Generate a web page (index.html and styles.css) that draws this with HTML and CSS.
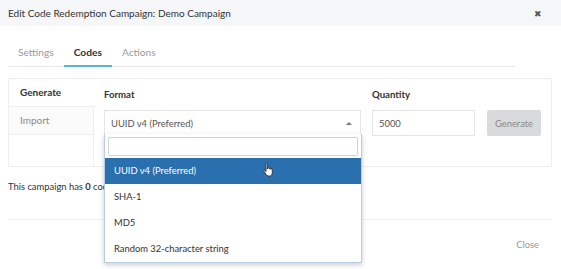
FILE: index.html
```html
<html>
<head>
<meta http-equiv="Content-Type" content="text/html; charset=UTF-8" />
<title>Edit Code Redemption Campaign</title>
<link rel="stylesheet" href="styles.css">
</head>
<body>

<div class="modal">
  <div class="modal-header">
    <span class="title">Edit Code Redemption Campaign: Demo Campaign</span>
    <span class="close-x">&#10006;</span>
  </div>

  <div class="modal-body">
    <ul class="tabs">
      <li><a href="#">Settings</a></li>
      <li class="active"><a href="#">Codes</a></li>
      <li><a href="#">Actions</a></li>
    </ul>

    <div class="panel">
      <ul class="side">
        <li class="active">Generate</li>
        <li>Import</li>
      </ul>
      <div class="form">
        <div class="field">
          <label>Format</label>
          <div class="select">
            <span>UUID v4 (Preferred)</span>
            <span class="caret"></span>
          </div>
        </div>
        <div class="field">
          <label>Quantity</label>
          <input class="qty" type="text" value="5000">
        </div>
        <div class="field">
          <button class="btn" disabled>Generate</button>
        </div>
      </div>
    </div>

    <p class="notice">This campaign has <b>0</b> codes.</p>
  </div>

  <div class="modal-footer">
    <a href="#" class="close-link">Close</a>
  </div>

  <div class="dropdown">
    <div class="search"><input type="text"></div>
    <ul class="options">
      <li class="hl">UUID v4 (Preferred)</li>
      <li>SHA-1</li>
      <li>MD5</li>
      <li>Random 32-character string</li>
    </ul>
  </div>

  <svg class="pointer" width="14" height="16" viewBox="0 0 14 16">
    <path d="M4 1.5c0-.8 1.4-.8 1.4 0V7l.4-.1V5.6c0-.8 1.4-.8 1.4 0v1.3l.3-.1c0-.8 1.4-.8 1.4 0v.6c.2-.7 1.4-.6 1.4.2v3.2c0 1.6-1 3.2-2.8 3.2H6.4c-1 0-1.7-.6-2.2-1.4L2 9.3c-.4-.7.6-1.4 1.2-.8L4 9.5z" fill="#fff" stroke="#222" stroke-width="0.8"/>
  </svg>
</div>

</body>
</html>
```

FILE: styles.css
```css
body {
	margin: 0;
	padding: 0;
	background: #fff;
	font-family: "Lato", "Liberation Sans", sans-serif;
	font-size: 10px;
	color: #333;
}

ul {
	list-style: none;
	margin: 0;
	padding: 0;
}

.modal {
	position: relative;
	width: 561px;
	height: 269px;
	overflow: hidden;
}

.modal-header {
	height: 26px;
	padding: 0 19px 0 8px;
	background: #f5f6f7;
	display: flex;
	align-items: center;
	justify-content: space-between;
}

.title {
	font-size: 10px;
	color: #333;
}

.close-x {
	font-size: 9px;
	color: #555;
}

.modal-body {
	padding: 12px 9px 0 8px;
}

.tabs {
	display: flex;
	border-bottom: 1px solid #e6e8ea;
	margin-right: 37px;
}

.tabs li a {
	display: block;
	padding: 6px 10px 5px;
	line-height: 16px;
	font-size: 10.2px;
	color: #9a9a9a;
	text-decoration: none;
	border-bottom: 2px solid transparent;
	margin-bottom: -1px;
}

.tabs li.active a {
	color: #333;
	font-weight: bold;
	border-bottom-color: #5ab4d4;
}

.panel {
	margin-top: 11px;
	border: 1px solid #eceeef;
	height: 87px;
	display: flex;
}

.side {
	width: 84px;
	background: #fff;
	border-right: 1px solid #eceeef;
}

.side li {
	height: 27px;
	line-height: 27px;
	padding-left: 11px;
	font-size: 10px;
	color: #8a8a8a;
	border-bottom: 1px solid #eceeef;
	background: #fbfbfb;
}

.side li.active {
	font-weight: bold;
	color: #333;
	background: #fff;
	margin-right: -1px;
}

.form {
	display: flex;
	gap: 11px;
	padding: 9px 0 0 10px;
}

.field label {
	display: block;
	font-weight: bold;
	font-size: 9.6px;
	line-height: 14px;
	margin-bottom: 8px;
	color: #333;
}

.select {
	width: 243px;
	height: 24px;
	border: 1px solid #e3e5e7;
	padding: 0 6px;
	display: flex;
	align-items: center;
	justify-content: space-between;
	font-size: 9.4px;
	color: #555;
}

.caret {
	width: 0;
	height: 0;
	border-left: 3px solid transparent;
	border-right: 3px solid transparent;
	border-bottom: 3px solid #777;
	margin-right: 2px;
}

.qty {
	width: 89px;
	height: 24px;
	border: 1px solid #e3e5e7;
	padding: 0 6px;
	font-family: inherit;
	font-size: 9.4px;
	color: #555;
	box-sizing: content-box;
}

.btn {
	margin-top: 22px;
	margin-left: 1px;
	width: 54px;
	height: 26px;
	border: 0;
	border-radius: 2px;
	background: #d9dadb;
	color: #8a8a8a;
	font-family: inherit;
	font-size: 9.4px;
}

.notice {
	margin: 14px 0 0;
	font-size: 9.4px;
}

.modal-footer {
	margin: 27px 10px 0 8px;
	border-top: 1px solid #f1f2f3;
	display: flex;
	justify-content: flex-end;
	padding: 19px 12px 0 0;
}

.close-link {
	font-size: 9.4px;
	color: #9a9a9a;
	text-decoration: none;
}

.dropdown {
	position: absolute;
	left: 104px;
	top: 134px;
	width: 256px;
	height: 128px;
	background: #fff;
	border: 1px solid #b8cfe2;
	border-top: 0;
	box-shadow: 0 2px 5px rgba(0, 0, 0, 0.2);
}

.search {
	padding: 3px 3px 2px;
}

.search input {
	display: block;
	width: 100%;
	height: 19px;
	box-sizing: border-box;
	border: 1px solid #cfd3d6;
	border-radius: 2px;
}

.options li {
	height: 26px;
	line-height: 26px;
	padding-left: 9px;
	font-size: 9.4px;
	color: #333;
}

.options li.hl {
	background: #2a6fae;
	color: #fff;
}

.pointer {
	position: absolute;
	left: 262px;
	top: 162px;
}
```
